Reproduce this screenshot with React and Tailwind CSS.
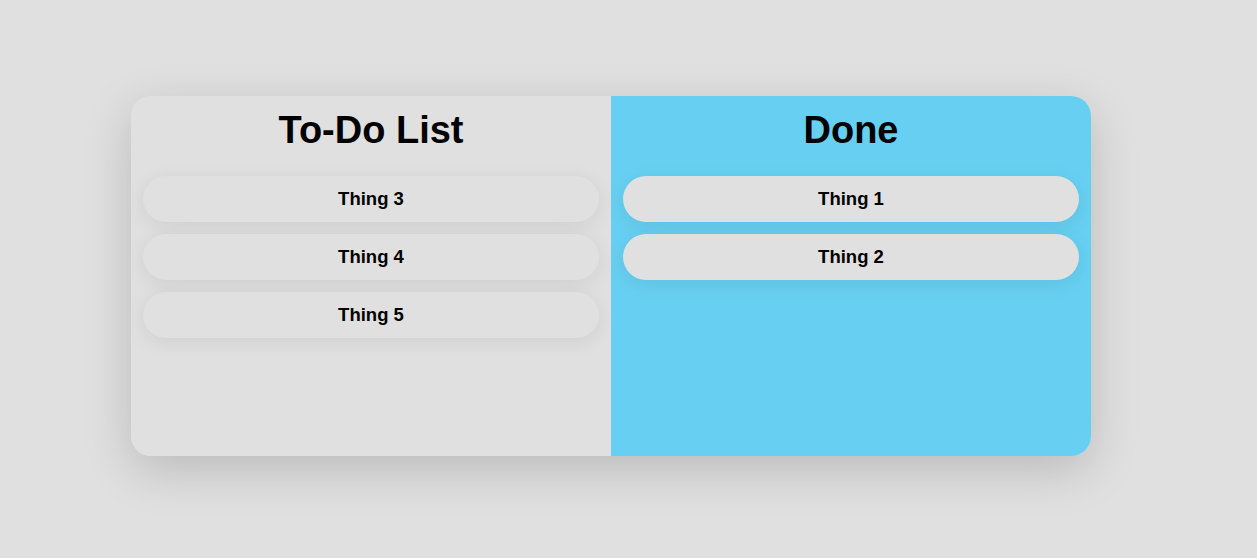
const todo = ['Thing 3', 'Thing 4', 'Thing 5'];
const done = ['Thing 1', 'Thing 2'];

function Item({ label }) {
  return (
    <div className="flex h-[46px] items-center justify-center rounded-full bg-[#e0e0e0] text-[18.5px] font-bold text-black shadow-[0_4px_20px_rgba(0,0,0,0.08)]">
      {label}
    </div>
  );
}

function Column({ title, items, className }) {
  return (
    <div className={`flex flex-1 flex-col px-3 pt-[14px] ${className}`}>
      <h1 className="mb-[26px] text-center text-[38px] leading-[40px] font-bold text-black">{title}</h1>
      <div className="flex flex-col gap-3">
        {items.map((t) => (
          <Item key={t} label={t} />
        ))}
      </div>
    </div>
  );
}

export default function App() {
  return (
    <div className="min-h-[558px] w-full bg-[#e0e0e0] pt-[96px] pl-[131px] font-['Liberation_Sans',Arial,sans-serif]">
      <div className="flex h-[360px] w-[960px] overflow-hidden rounded-[20px] shadow-[0_14px_48px_rgba(0,0,0,0.17)]">
        <Column title="To-Do List" items={todo} className="bg-[#e0e0e0]" />
        <Column title="Done" items={done} className="bg-[#67d0f2]" />
      </div>
    </div>
  );
}
